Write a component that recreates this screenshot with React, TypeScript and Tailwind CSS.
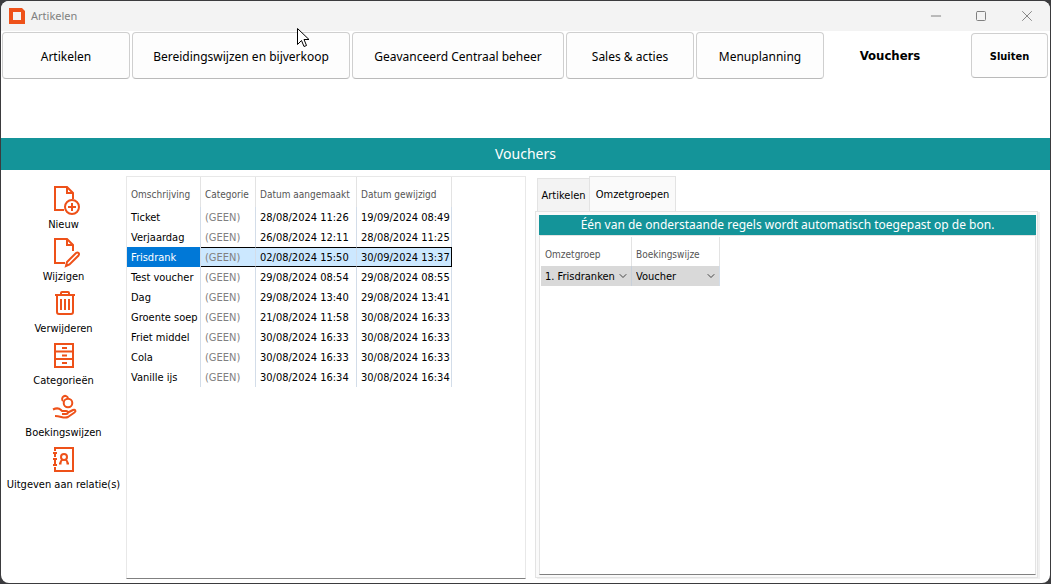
import { useState, type ReactNode } from "react";
import { ChevronDown, Minus, Square, X } from "lucide-react";
import clsx from "clsx";

const tabs = [
  { label: "Artikelen", width: "w-32" },
  { label: "Bereidingswijzen en bijverkoop", width: "w-[218px]" },
  { label: "Geavanceerd Centraal beheer", width: "w-[212px]" },
  { label: "Sales & acties", width: "w-32" },
  { label: "Menuplanning", width: "w-32" },
  { label: "Vouchers", width: "w-32" },
];

const vouchers = [
  ["Ticket", "28/08/2024 11:26", "19/09/2024 08:49"],
  ["Verjaardag", "26/08/2024 12:11", "28/08/2024 11:25"],
  ["Frisdrank", "02/08/2024 15:50", "30/09/2024 13:37"],
  ["Test voucher", "29/08/2024 08:54", "29/08/2024 08:55"],
  ["Dag", "29/08/2024 13:40", "29/08/2024 13:41"],
  ["Groente soep", "21/08/2024 11:58", "30/08/2024 16:33"],
  ["Friet middel", "30/08/2024 16:33", "30/08/2024 16:33"],
  ["Cola", "30/08/2024 16:33", "30/08/2024 16:33"],
  ["Vanille ijs", "30/08/2024 16:34", "30/08/2024 16:34"],
];

const actions: { label: string; icon: ReactNode }[] = [
  {
    label: "Nieuw",
    icon: (
      <>
        <path d="M16 26H7V3h12l6 6v6M19 3v6h6" />
        <circle cx="24" cy="23" r="7" />
        <path d="M24 19v8M20 23h8" />
      </>
    ),
  },
  {
    label: "Wijzigen",
    icon: (
      <>
        <path d="M17 27H7V3h12l6 6v6M19 3v6h6" />
        <path d="M18 30l1-4 9-9q1.500-1 2.500 0t0 2.500l-9 9z" />
      </>
    ),
  },
  {
    label: "Verwijderen",
    icon: (
      <>
        <path d="M7 7h20M13 7V5q0-1 1-1h6q1 0 1 1v2M9 8v16q0 2 2 2h12q2 0 2-2V8" />
        <path d="M13 11v11M17 11v11M21 11v11" />
      </>
    ),
  },
  {
    label: "Categorieën",
    icon: <path d="M7 4h18v23H7zM7 11.500h18M7 19h18M14 8h5M14 15.500h5M14 23h5" />,
  },
  {
    label: "Boekingswijzen",
    icon: (
      <>
        <circle cx="20" cy="11" r="4.300" />
        <path d="M15 9a3 3 0 1 1 5-3" />
        <path d="M5 17.500c3-1.500 6-1.500 8 .5l1 1h4c2.500 0 2.500 3 0 3h-4M19 21l6-3c2-1 3.500 1 1.500 2.500L20 25c-4 2-7-1-13-1" />
      </>
    ),
  },
  {
    label: "Uitgeven aan relatie(s)",
    icon: (
      <>
        <path d="M10 4h15v23H7v-4M7 7V4h3M7 10v3M7 16v4M5 9h4M5 15h4M5 21h4" />
        <circle cx="16" cy="13" r="3" />
        <path d="M11 19.500h1.500c0-2 .5-3 2-4M21 19.500h-1.500c0-2-.5-3-2-4" />
      </>
    ),
  },
];

function TitleBar() {
  return (
    <header className="flex h-[30px] items-center bg-[#f3f3f3] pl-2 text-[#808080]">
      <svg viewBox="0 0 16 16" className="size-4">
        <path fill="#ee5119" fillRule="evenodd" d="M0 0h13l3 3v13H0zM4 4v8h8V4z" />
      </svg>
      <h1 className="ml-1.5 flex-1 font-['Noto_Sans',sans-serif] text-[11px]">Artikelen</h1>
      <button aria-label="Minimaliseren" className="flex w-[45px] justify-center">
        <Minus className="size-4" strokeWidth={1.5} />
      </button>
      <button aria-label="Maximaliseren" className="flex w-[45px] justify-center">
        <Square className="size-3" strokeWidth={2} />
      </button>
      <button aria-label="Venster sluiten" className="flex w-[47px] justify-center">
        <X className="size-[18px]" strokeWidth={1.25} />
      </button>
    </header>
  );
}

function HeadCell({ width, children }: { width: string; children: ReactNode }) {
  return (
    <th className={clsx(width, "border-r border-[#e3e3e3] p-0 pt-1.5 pl-1 text-[10px] font-normal whitespace-nowrap text-[#555]")}>
      {children}
    </th>
  );
}

function GridSelect({ label, options }: { label: string; options: string[] }) {
  return (
    <div className="relative">
      <select aria-label={label} className="block h-5 w-full appearance-none bg-[#d9d9d9] pt-0.5 pl-1">
        {options.map((option) => (
          <option key={option}>{option}</option>
        ))}
      </select>
      <ChevronDown className="pointer-events-none absolute top-1 right-0.5 size-3 text-[#444]" strokeWidth={2} />
    </div>
  );
}

function VoucherTable() {
  const [selected, setSelected] = useState(2);
  const cell = "border-r border-[#d3dde9] p-0 pt-0.5 pl-1 whitespace-nowrap";
  const activeCell = "border-y border-y-black bg-[#cce8ff]";

  return (
    <table className="w-[325px] table-fixed border-separate border-spacing-0 text-left">
      <thead>
        <tr className="h-[30px]">
          <HeadCell width="w-[74px]">Omschrijving</HeadCell>
          <HeadCell width="w-[55px]">Categorie</HeadCell>
          <HeadCell width="w-[101px]">Datum aangemaakt</HeadCell>
          <HeadCell width="w-[95px]">Datum gewijzigd</HeadCell>
        </tr>
      </thead>
      <tbody>
        {vouchers.map(([name, created, changed], i) => {
          const active = i === selected;
          return (
            <tr key={name} className="h-5" onClick={() => setSelected(i)}>
              <td className={clsx(cell, active && "bg-[#0078d7] text-white")}>{name}</td>
              <td className={clsx(cell, "text-[#808080]", active && activeCell)}>(GEEN)</td>
              <td className={clsx(cell, active && activeCell)}>{created}</td>
              <td className={clsx(cell, active && activeCell, active && "border-r-black")}>{changed}</td>
            </tr>
          );
        })}
      </tbody>
    </table>
  );
}

function RevenuePanel() {
  return (
    <section className="mr-0.5 mb-px flex flex-1 flex-col">
      <div className="flex items-end pl-0.5" role="tablist">
        <button role="tab" aria-selected="false" className="h-[33px] w-[52px] border border-r-0 border-b-0 border-[#e3e3e3] bg-[#f3f3f3] pt-0.5">
          Artikelen
        </button>
        <button role="tab" aria-selected="true" className="h-[35px] w-[87px] border border-b-0 border-[#e3e3e3] bg-[#fafafa] pt-0.5">
          Omzetgroepen
        </button>
      </div>
      <div className="flex flex-1 flex-col border border-[#e3e3e3] bg-[#fafafa] pt-[3px] pr-px pb-0.5 pl-[3px] shadow-[2px_1px_0_#f0f0f0]">
        <p className="bg-[#149499] text-center font-['Noto_Sans',sans-serif] text-xs leading-5 text-white">
          Één van de onderstaande regels wordt automatisch toegepast op de bon.
        </p>
        <div className="flex-1 border border-[#e3e3e3] border-b-[#808080] bg-white pt-px pl-px">
          <table className="w-[179px] table-fixed border-separate border-spacing-0 text-left">
            <thead>
              <tr className="h-[29px]">
                <HeadCell width="w-[91px]">Omzetgroep</HeadCell>
                <HeadCell width="w-[88px]">Boekingswijze</HeadCell>
              </tr>
            </thead>
            <tbody>
              <tr>
                <td className="border-r border-[#c8d0da] p-0">
                  <GridSelect label="Omzetgroep" options={["1. Frisdranken"]} />
                </td>
                <td className="border-r border-[#d3dde9] p-0">
                  <GridSelect label="Boekingswijze" options={["Voucher"]} />
                </td>
              </tr>
            </tbody>
          </table>
        </div>
      </div>
    </section>
  );
}

export default function App() {
  return (
    <div className="flex min-h-screen bg-[#3b3b3e] p-px font-['DejaVu_Sans_Condensed','Noto_Sans',sans-serif] text-[11px] leading-4 text-black">
      <div className="relative flex flex-1 flex-col overflow-hidden rounded-lg bg-white">
        <TitleBar />

        <nav className="flex h-[107px] items-start gap-0.5 pt-px pr-0.5 pl-px">
          {tabs.map(({ label, width }) =>
            label === "Vouchers" ? (
              <button key={label} aria-current="page" className={clsx(width, "h-[47px] text-[13px] font-bold")}>
                {label}
              </button>
            ) : (
              <button
                key={label}
                className={clsx(
                  width,
                  "h-[47px] rounded border border-[#cfcfcf] border-b-[#bababa] bg-[#fdfdfd] pt-0.5 font-['Noto_Sans',sans-serif] text-xs whitespace-nowrap",
                )}
              >
                {label}
              </button>
            ),
          )}
          <button className="mt-px ml-auto h-[45px] w-[77px] rounded border border-[#cfcfcf] border-b-[#bababa] bg-[#fdfdfd] pt-0.5 font-bold">
            Sluiten
          </button>
        </nav>

        <h2 className="bg-[#149499] text-center font-['Noto_Sans',sans-serif] text-sm leading-8 text-white">Vouchers</h2>

        <main className="flex flex-1 pt-1.5 pr-2.5 pb-1">
          <aside className="flex w-[125px] flex-col pt-2">
            {actions.map(({ label, icon }) => (
              <button key={label} className="flex h-[52px] flex-col items-center whitespace-nowrap">
                <svg viewBox="0 0 31 33" className="h-[33px] w-[31px] overflow-visible" fill="none" stroke="#ee5119" strokeWidth="2">
                  {icon}
                </svg>
                {label}
              </button>
            ))}
          </aside>
          <section className="mr-[9px] w-[400px] border border-[#e8e8e8] border-b-[#808080]">
            <VoucherTable />
          </section>
          <RevenuePanel />
        </main>

        {/* Mouse pointer */}
        <svg viewBox="0 0 13 20" className="pointer-events-none absolute top-[27px] left-[296px] h-5 w-[13px]">
          <path d="M.5.5v16l4-4 2.500 6 2.500-1-2.500-6h5z" fill="white" stroke="black" />
        </svg>
      </div>
    </div>
  );
}
